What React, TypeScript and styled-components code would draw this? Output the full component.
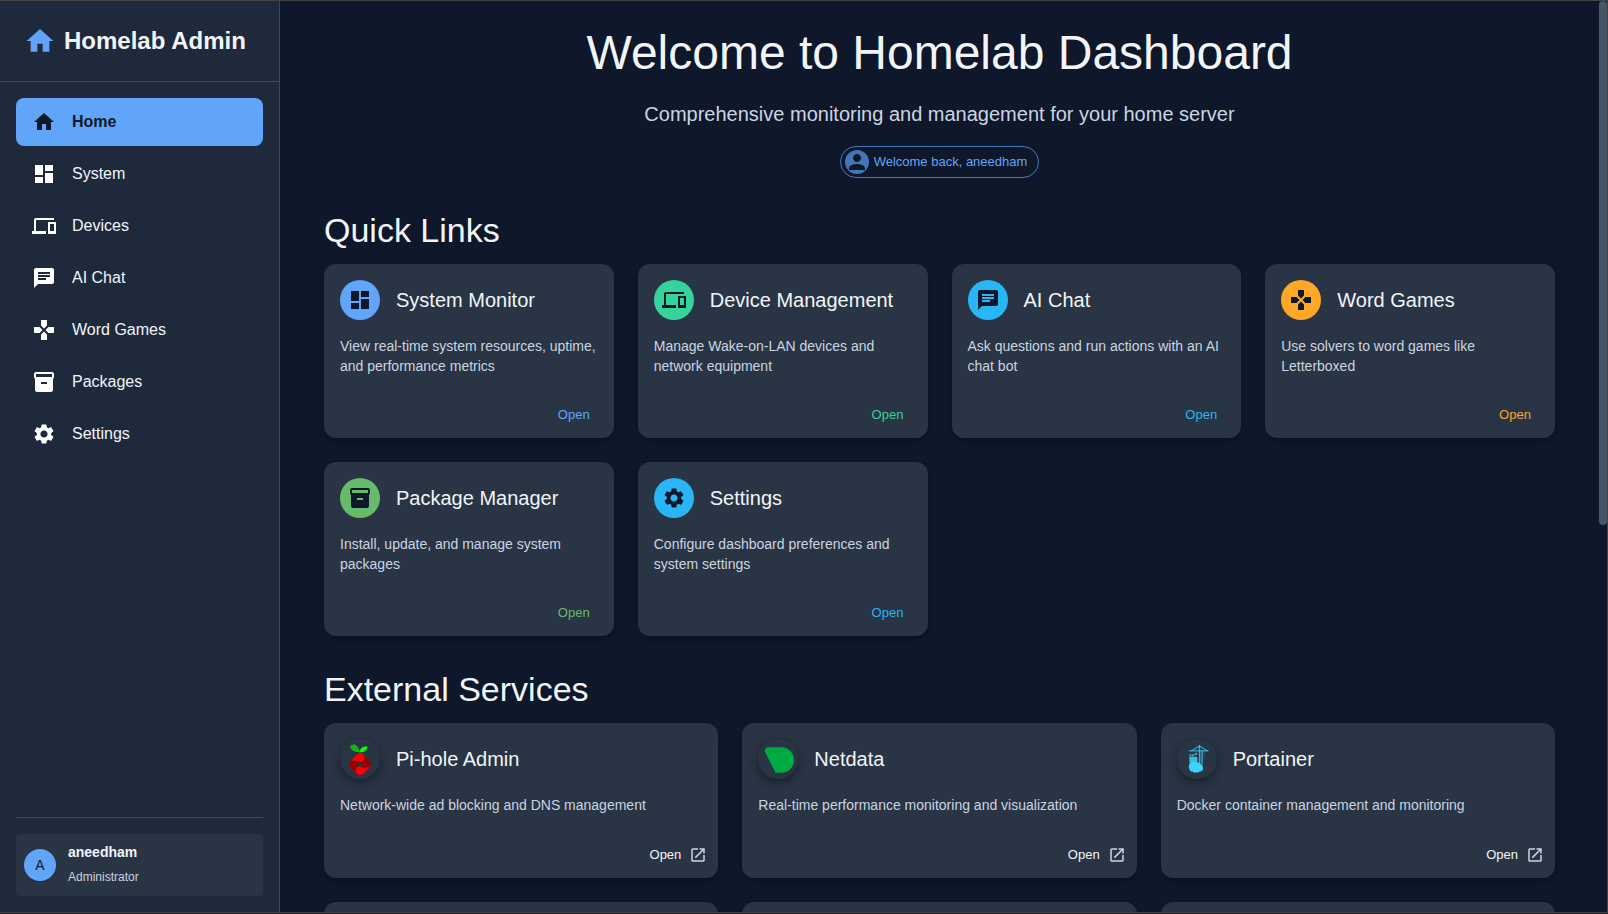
import type { ReactNode } from "react";
import styled, { createGlobalStyle } from "styled-components";
import {
  MdChat,
  MdDashboard,
  MdDevices,
  MdGames,
  MdHome,
  MdInventory2,
  MdOpenInNew,
  MdPerson,
  MdSettings,
} from "react-icons/md";

const colors = {
  page: "#0f172a",
  sidebar: "#1e293b",
  card: "#293444",
  line: "#3e4756",
  text: "#f1f5f9",
  muted: "#cbd5e1",
  blue: "#60a5fa",
  green: "#34d399",
  sky: "#29b6f6",
  orange: "#ffa726",
  leaf: "#66bb6a",
};

const GlobalStyle = createGlobalStyle`
  * { box-sizing: border-box; }
  body {
    margin: 0;
    background: ${colors.page};
    color: ${colors.text};
    font-family: "Liberation Sans", Arial, sans-serif;
    font-size: 16px;
    line-height: 24px;
  }
  h1, h2, h3, p, ul { margin: 0; padding: 0; font-weight: 400; }
  ul { list-style: none; }
  a { color: inherit; text-decoration: none; }
`;

const Window = styled.div`
  height: 100vh;
  padding-bottom: 1px;
  background: #1a1b1e;
`;

const Shell = styled.div`
  display: flex;
  height: 100%;
  border: 1px solid #434343;
  border-left: 0;
  background: ${colors.page};
  overflow: hidden;
`;

const Sidebar = styled.aside`
  display: flex;
  flex-direction: column;
  flex: 0 0 280px;
  background: ${colors.sidebar};
  border-right: 1px solid ${colors.line};
`;

const Brand = styled.div`
  display: flex;
  align-items: center;
  gap: 8px;
  padding: 24px;
  border-bottom: 1px solid ${colors.line};
  font-size: 24px;
  font-weight: 700;
  line-height: 32px;
  white-space: nowrap;

  svg { color: ${colors.blue}; }
`;

const NavList = styled.ul`
  display: flex;
  flex-direction: column;
  gap: 4px;
  padding: 16px;
`;

const NavLink = styled.a<{ $active?: boolean }>`
  display: flex;
  align-items: center;
  gap: 16px;
  height: 48px;
  padding: 0 16px;
  border-radius: 8px;
  background: ${(p) => (p.$active ? colors.blue : "transparent")};
  color: ${(p) => (p.$active ? "#111827" : colors.text)};
  font-weight: ${(p) => (p.$active ? 700 : 400)};

  svg { color: ${(p) => (p.$active ? "#111827" : "#ffffff")}; }
`;

const Account = styled.div`
  margin: auto 16px 0;
  padding: 16px 0;
  border-top: 1px solid ${colors.line};
`;

const AccountCard = styled.div`
  display: flex;
  align-items: center;
  gap: 12px;
  padding: 8px;
  border-radius: 4px;
  background: ${colors.card};
`;

const Initial = styled.span`
  display: grid;
  place-items: center;
  width: 32px;
  height: 32px;
  border-radius: 50%;
  background: ${colors.blue};
  color: ${colors.page};
  font-size: 14px;
`;

const AccountText = styled.div`
  display: flex;
  flex-direction: column;
  gap: 4px;
`;

const AccountName = styled.p`
  font-size: 14px;
  font-weight: 700;
  line-height: 20px;
`;

const AccountRole = styled.p`
  color: ${colors.muted};
  font-size: 12px;
  line-height: 22px;
`;

const Main = styled.main`
  flex: 1;
  min-width: 0;
  padding: 24px 44px;
  overflow-y: auto;
  scrollbar-width: none;
`;

const ScrollTrack = styled.div`
  flex: 0 0 8px;
`;

const ScrollThumb = styled.div`
  height: 57.5%;
  border-radius: 4px;
  background: #475569;
`;

const Hero = styled.header`
  display: flex;
  flex-direction: column;
  align-items: center;
  margin-bottom: 32px;
  text-align: center;
`;

const HeroTitle = styled.h1`
  margin-bottom: 17px;
  font-size: 48px;
  line-height: 56px;
`;

const HeroText = styled.p`
  margin-bottom: 16px;
  color: ${colors.muted};
  font-size: 20px;
  line-height: 32px;
`;

const UserChip = styled.div`
  display: flex;
  align-items: center;
  gap: 5px;
  height: 32px;
  padding: 0 11px 0 4px;
  border: 1px solid #4679bb;
  border-radius: 16px;
  color: ${colors.blue};
  font-size: 13px;
`;

const ChipAvatar = styled.span`
  display: flex;
  border-radius: 50%;
  background: #4475b5;
  color: ${colors.page};
`;

const Section = styled.section`
  margin-bottom: 33px;
`;

const SectionTitle = styled.h2`
  margin-bottom: 14px;
  font-size: 34px;
  line-height: 40px;
`;

const CardGrid = styled.div<{ $columns: number }>`
  display: grid;
  grid-template-columns: repeat(${(p) => p.$columns}, minmax(0, 1fr));
  gap: 24px;
`;

const Card = styled.article`
  display: flex;
  flex-direction: column;
  min-height: 155px;
  border-radius: 12px;
  background: ${colors.card};
  box-shadow: 0 4px 6px -1px rgba(0, 0, 0, 0.3);
`;

const CardBody = styled.div`
  flex: 1;
  padding: 16px;
`;

const CardHeader = styled.div`
  display: flex;
  align-items: center;
  gap: 16px;
  margin-bottom: 16px;
`;

const CardTitle = styled.h3`
  font-size: 20px;
  line-height: 32px;
`;

const CardText = styled.p`
  color: ${colors.muted};
  font-size: 14px;
  line-height: 20px;
`;

const IconDisc = styled.span<{ $tone: string }>`
  display: grid;
  place-items: center;
  flex: none;
  width: 40px;
  height: 40px;
  border-radius: 50%;
  background: ${(p) => p.$tone};
  color: ${colors.page};
`;

const LogoDisc = styled(IconDisc)`
  box-shadow: 0 3px 5px -1px rgba(0, 0, 0, 0.2), 0 5px 8px rgba(0, 0, 0, 0.14),
    0 1px 14px rgba(0, 0, 0, 0.12);
`;

const CardActions = styled.div`
  display: flex;
  justify-content: flex-end;
  padding: 8px;
`;

const OpenButton = styled.button<{ $tone: string }>`
  min-width: 64px;
  height: 30px;
  padding: 4px 5px;
  border: 0;
  border-radius: 8px;
  background: none;
  color: ${(p) => p.$tone};
  font: inherit;
  font-size: 13px;
  line-height: 22px;
  cursor: pointer;
`;

const OpenLink = styled.a`
  display: flex;
  align-items: center;
  gap: 8px;
  height: 31px;
  padding: 0 3px;
  font-size: 13px;
  line-height: 22px;

  svg { color: ${colors.muted}; }
`;

const PiholeLogo = () => (
  <svg width="40" height="40" viewBox="0 0 40 40" aria-hidden="true">
    <path d="M19.600 14C19.400 10 17.500 6.400 14.500 5.200 13 5.900 11.400 5.400 10.200 7.200c.3 3.500 4.300 6.300 8.300 5.800z" fill="#12b612" />
    <path d="M19.600 14c-.2-3.500 2.200-6.800 7.700-6.700.1 4-2.800 6.500-7.300 5.900z" fill="#0f0" />
    <path d="M10.800 21.500 18 14.700q2.200-1.500 4.300 0l2.400 2.400q1 5.600-4.700 6.100-2-1.200-4.200-1.200z" fill="#f00" />
    <path d="m24.700 17.100 5.700 5.800q1.500 2.200 0 4.700-3.200 3.300-8 1.600l-.4-5.700q3.400-1.500 2.700-6.400z" fill="#960000" />
    <path d="m30.200 27.900-7.700 7.600q-2.200 1.600-4.600 0l-2.600-2.500q-.6-4.800 4.300-6 2.200 1.900 4.800 1.700z" fill="#f00" />
    <path d="M10.800 21.500q-3.300 2.500-1.500 5.300l6 6.200q-.4-3.600 3.100-5.500v-4.600q-3.400-.4-7.600-1.400z" fill="#960000" />
    <path d="M18.300 23.200h3.700v4.200h-3.700z" fill={colors.card} />
  </svg>
);

const NetdataLogo = () => (
  <svg width="40" height="40" viewBox="0 0 40 40" aria-hidden="true">
    <path d="M9 8.200h14.300c7.300 0 12.700 5.700 12.700 12.800 0 7.200-5.500 12.700-12.500 12.700h-6L6.400 11.600z" fill="#00ab44" />
  </svg>
);

const PortainerLogo = () => (
  <svg width="40" height="40" viewBox="0 0 40 40" aria-hidden="true" fill="#3bd4fb">
    <path d="M12 11.300h19.500v1.100H12z" opacity=".85" />
    <path d="m22.500 6.300 8.500 5.400-1 .5-7.500-4.500-7.800 4.500-1-.5z" opacity=".75" />
    <path d="M21.900 6.300h1.100v19h-1.100zM24.600 12h1.100v13.500h-1.100z" opacity=".8" />
    <path d="M23 12.500h1.600V25H23zM26.800 12.400h.7v7h-.7z" opacity=".3" />
    <path d="M17.800 13.800h2.500v2.400h-2.500zM12.300 15.200h2.300v2.200h-2.300zM15 15.200h2.300v2.200H15z" opacity=".7" />
    <path d="M12.300 17.900h8.100v5.700h-8.100z" opacity=".85" />
    <path d="M12.400 25.300q.4-2.600 3-2.200 2-2 4 .4 3-.6 4 1.600 2.600.5 2.400 3.200 1 4.200-3 4.300-1.400 1.500-3.200.6-2.300 1.300-4-.6-2.800.3-3.100-2.300-1.500-2.600-.1-5z" />
  </svg>
);

type NavItem = { label: string; icon: ReactNode };
type QuickLink = { title: string; text: string; tone: string; icon: ReactNode };
type Service = { title: string; text: string; logo: ReactNode };

const navItems: NavItem[] = [
  { label: "Home", icon: <MdHome size={24} /> },
  { label: "System", icon: <MdDashboard size={24} /> },
  { label: "Devices", icon: <MdDevices size={24} /> },
  { label: "AI Chat", icon: <MdChat size={24} /> },
  { label: "Word Games", icon: <MdGames size={24} /> },
  { label: "Packages", icon: <MdInventory2 size={24} /> },
  { label: "Settings", icon: <MdSettings size={24} /> },
];

const quickLinks: QuickLink[] = [
  {
    title: "System Monitor",
    text: "View real-time system resources, uptime, and performance metrics",
    tone: colors.blue,
    icon: <MdDashboard size={24} />,
  },
  {
    title: "Device Management",
    text: "Manage Wake-on-LAN devices and network equipment",
    tone: colors.green,
    icon: <MdDevices size={24} />,
  },
  {
    title: "AI Chat",
    text: "Ask questions and run actions with an AI chat bot",
    tone: colors.sky,
    icon: <MdChat size={24} />,
  },
  {
    title: "Word Games",
    text: "Use solvers to word games like Letterboxed",
    tone: colors.orange,
    icon: <MdGames size={24} />,
  },
  {
    title: "Package Manager",
    text: "Install, update, and manage system packages",
    tone: colors.leaf,
    icon: <MdInventory2 size={24} />,
  },
  {
    title: "Settings",
    text: "Configure dashboard preferences and system settings",
    tone: colors.sky,
    icon: <MdSettings size={24} />,
  },
];

const services: Service[] = [
  {
    title: "Pi-hole Admin",
    text: "Network-wide ad blocking and DNS management",
    logo: <PiholeLogo />,
  },
  {
    title: "Netdata",
    text: "Real-time performance monitoring and visualization",
    logo: <NetdataLogo />,
  },
  {
    title: "Portainer",
    text: "Docker container management and monitoring",
    logo: <PortainerLogo />,
  },
];

export default function App() {
  return (
    <Window>
      <GlobalStyle />
      <Shell>
        <Sidebar>
          <Brand>
            <MdHome size={32} />
            Homelab Admin
          </Brand>
          <nav>
            <NavList>
              {navItems.map((item, i) => (
                <li key={item.label}>
                  <NavLink href="#" $active={i === 0}>
                    {item.icon}
                    {item.label}
                  </NavLink>
                </li>
              ))}
            </NavList>
          </nav>
          <Account>
            <AccountCard>
              <Initial>A</Initial>
              <AccountText>
                <AccountName>aneedham</AccountName>
                <AccountRole>Administrator</AccountRole>
              </AccountText>
            </AccountCard>
          </Account>
        </Sidebar>
        <Main>
          <Hero>
            <HeroTitle>Welcome to Homelab Dashboard</HeroTitle>
            <HeroText>Comprehensive monitoring and management for your home server</HeroText>
            <UserChip>
              <ChipAvatar>
                <MdPerson size={24} />
              </ChipAvatar>
              Welcome back, aneedham
            </UserChip>
          </Hero>
          <Section>
            <SectionTitle>Quick Links</SectionTitle>
            <CardGrid $columns={4}>
              {quickLinks.map((link) => (
                <Card key={link.title}>
                  <CardBody>
                    <CardHeader>
                      <IconDisc $tone={link.tone}>{link.icon}</IconDisc>
                      <CardTitle>{link.title}</CardTitle>
                    </CardHeader>
                    <CardText>{link.text}</CardText>
                  </CardBody>
                  <CardActions>
                    <OpenButton $tone={link.tone}>Open</OpenButton>
                  </CardActions>
                </Card>
              ))}
            </CardGrid>
          </Section>
          <Section>
            <SectionTitle>External Services</SectionTitle>
            <CardGrid $columns={3}>
              {services.map((service) => (
                <Card key={service.title}>
                  <CardBody>
                    <CardHeader>
                      <LogoDisc $tone={colors.card}>{service.logo}</LogoDisc>
                      <CardTitle>{service.title}</CardTitle>
                    </CardHeader>
                    <CardText>{service.text}</CardText>
                  </CardBody>
                  <CardActions>
                    <OpenLink href="#">
                      Open
                      <MdOpenInNew size={18} />
                    </OpenLink>
                  </CardActions>
                </Card>
              ))}
              <Card />
              <Card />
              <Card />
            </CardGrid>
          </Section>
        </Main>
        <ScrollTrack>
          <ScrollThumb />
        </ScrollTrack>
      </Shell>
    </Window>
  );
}
